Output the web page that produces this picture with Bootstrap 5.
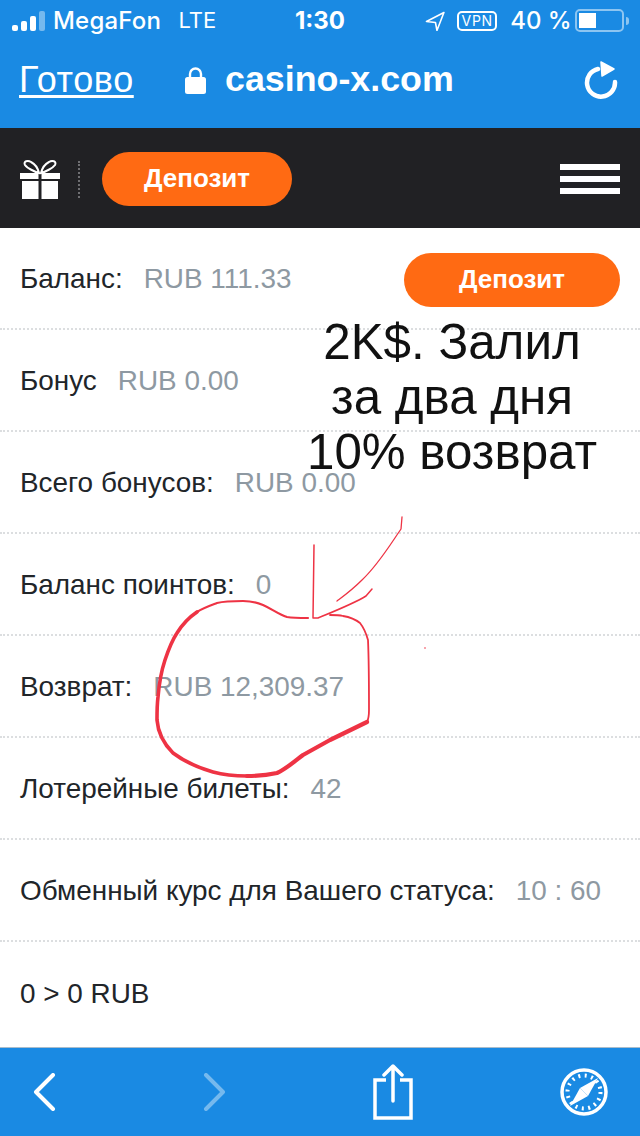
<!DOCTYPE html>
<html lang="ru">
<head>
    <meta charset="UTF-8">
    <title>casino-x.com</title>
    <link href="https://cdn.jsdelivr.net/npm/bootstrap@5.3.3/dist/css/bootstrap.min.css" rel="stylesheet">
    <style>
        body { background: #fff; font-family: "Liberation Sans", sans-serif; overflow: hidden; }
        .page-wrap { width: 640px; height: 1136px; position: relative; }
        .safari-top { height: 128px; background: #1a8ae3; color: #fff; font-family: Inter, "Liberation Sans", sans-serif; }
        .status-row { height: 41px; padding: 0 11px 0 12px; font-size: 24px; line-height: 41px; }
        .signal { gap: 3px; height: 20px; width: 33px; margin-right: 8px; }
        .signal i { display: block; width: 6px; background: #fff; border-radius: 2px; }
        .signal i:nth-child(1) { height: 6px; }
        .signal i:nth-child(2) { height: 10px; }
        .signal i:nth-child(3) { height: 15px; }
        .signal i:nth-child(4) { height: 20px; opacity: .4; }
        .net-name { font-weight: 500; font-size: 24px; letter-spacing: .2px; width: 126px; }
        .net-type { font-size: 22px; width: 117px; }
        .clock { font-weight: 700; font-size: 24px; width: 127px; }
        .vpn-tag { border: 2px solid #fff; border-radius: 5px; font-size: 14px; line-height: 16px; padding: 1px 3px; margin: 0 13px 0 12px; letter-spacing: .8px; width: 40px; height: 20px; }
        .pct { font-weight: 500; font-size: 24px; width: 61px; white-space: nowrap; }
        .batt { width: 49px; height: 23px; border: 2px solid rgba(255,255,255,.5); border-radius: 5px; padding: 2px; margin-left: 4px; }
        .batt i { display: block; width: 17px; height: 15px; background: #fff; }
        .batt-tip { width: 3px; height: 8px; background: rgba(255,255,255,.5); margin-left: 2px; border-radius: 0 3px 3px 0; }
        .addr-row { height: 87px; padding: 0 22px 9px 19px; font-family: "Liberation Sans", sans-serif; }
        .done-link { color: #fff; font-size: 36px; text-decoration: underline; text-underline-offset: 3px; width: 166px; letter-spacing: .6px; }
        .host { font-size: 35.800px; font-weight: 700; margin-left: 19px; }
        .site-bar { height: 100px; background: #212124; padding: 2px 20px 0; }
        .gift-sep { height: 37px; border-left: 2px dotted #6f6f72; margin: 0 22px 0 18px; }
        .btn-orange { background: #ff6a13; color: #fff; font-weight: 700; font-size: 26px; border: 0; border-radius: 27px; height: 54px; line-height: 52px; padding: 0; text-align: center; }
        .btn-orange:hover { background: #ff6a13; color: #fff; }
        .btn-top { width: 190px; }
        .btn-side { width: 216px; margin-top: 1px; }
        .burger { width: 60px; }
        .burger i { display: block; height: 6px; background: #fff; margin-bottom: 6px; }
        .burger i:last-child { margin-bottom: 0; }
        .info-list { height: 819px; font-size: 27.900px; line-height: 1.1; color: #212529; }
        .info-row { height: 102px; padding: 2px 20px 0; border-bottom: 2px dotted #dcdee0; }
        .info-row:last-child { border-bottom: 0; }
        .info-val { color: #8e99a2; margin-left: 21px; }
        .safari-bottom { height: 89px; background: #1a8ae3; border-top: 1px solid #a9bccb; padding: 0 32px; }
        .fwd-ico { margin-left: 143px; }
        .share-ico { margin-left: 145px; }
        .note-text { position: absolute; left: 290px; top: 314px; width: 324px; text-align: center; font-size: 49.300px; line-height: 55px; color: #111; }
        .scribble { position: absolute; left: 0; top: 0; pointer-events: none; }
    </style>
</head>
<body>

<div class="page-wrap d-flex flex-column">
    <div class="safari-top">
        <div class="status-row d-flex align-items-center">
            <span class="signal d-flex align-items-end"><i></i><i></i><i></i><i></i></span>
            <span class="net-name">MegaFon</span>
            <span class="net-type">LTE</span>
            <span class="clock">1:30</span>
            <svg width="20" height="20" viewBox="0 0 20 20" fill="none" stroke="#fff" stroke-width="1.600" stroke-linejoin="round" class="ms-1"><path d="M19 1.500 1.500 10.500 10.500 11.500 12 19.500Z"/></svg>
            <span class="vpn-tag d-inline-flex align-items-center justify-content-center">VPN</span>
            <span class="pct">40 %</span>
            <span class="batt"><i></i></span>
            <span class="batt-tip"></span>
        </div>
        <div class="addr-row d-flex align-items-center">
            <a href="#" class="done-link">Готово</a>
            <svg width="21" height="28" viewBox="0 0 21 28" fill="#fff"><path d="M5 12V8a5.500 5.500 0 0 1 11 0v4" fill="none" stroke="#fff" stroke-width="2.400"/><rect x="0" y="11" width="21" height="17" rx="2.500"/></svg>
            <span class="host">casino-x.com</span>
            <svg class="ms-auto" width="34" height="38" viewBox="0 0 34 38" fill="none"><path d="M14 8A14 14 0 1 0 31 21" stroke="#fff" stroke-width="4.500" stroke-linecap="round"/><path d="M17 1 30 8 18 15Z" fill="#fff" stroke="#fff" stroke-width="1.500" stroke-linejoin="round"/></svg>
        </div>
    </div>

    <div class="site-bar d-flex align-items-center">
        <svg width="40" height="40" viewBox="0 0 40 40" fill="#fff"><path d="M19 14C15 13 7 9 5 6c-2-4 3-5 6-3 4 2 7 7 8 11Zm2 0c4-1 12-5 14-8 2-4-3-5-6-3-4 2-7 7-8 11Z" fill="none" stroke="#fff" stroke-width="2"/><rect x="0" y="14" width="18.500" height="6"/><rect x="21.500" y="14" width="18.500" height="6"/><rect x="2" y="22" width="16.500" height="18"/><rect x="21.500" y="22" width="16.500" height="18"/></svg>
        <span class="gift-sep"></span>
        <a href="#" class="btn btn-orange btn-top">Депозит</a>
        <div class="burger ms-auto"><i></i><i></i><i></i></div>
    </div>

    <div class="info-list">
        <div class="info-row d-flex align-items-center">
            <span>Баланс:</span><span class="info-val">RUB 111.33</span>
            <a href="#" class="btn btn-orange btn-side ms-auto">Депозит</a>
        </div>
        <div class="info-row d-flex align-items-center"><span>Бонус</span><span class="info-val">RUB 0.00</span></div>
        <div class="info-row d-flex align-items-center"><span>Всего бонусов:</span><span class="info-val">RUB 0.00</span></div>
        <div class="info-row d-flex align-items-center"><span>Баланс поинтов:</span><span class="info-val">0</span></div>
        <div class="info-row d-flex align-items-center"><span>Возврат:</span><span class="info-val">RUB 12,309.37</span></div>
        <div class="info-row d-flex align-items-center"><span>Лотерейные билеты:</span><span class="info-val">42</span></div>
        <div class="info-row d-flex align-items-center"><span>Обменный курс для Вашего статуса:</span><span class="info-val">10 : 60</span></div>
        <div class="info-row d-flex align-items-center"><span>0 &gt; 0 RUB</span></div>
    </div>

    <div class="safari-bottom d-flex align-items-center">
        <svg width="26" height="38" viewBox="0 0 26 38" fill="none" stroke="#fff" stroke-width="4" stroke-linecap="round" stroke-linejoin="round"><path d="M21 2 4 19l17 17"/></svg>
        <svg width="26" height="38" viewBox="0 0 26 38" fill="none" stroke="#fff" stroke-opacity=".4" stroke-width="4" stroke-linecap="round" stroke-linejoin="round" class="fwd-ico"><path d="M5 2l17 17L5 36"/></svg>
        <svg width="42" height="56" viewBox="0 0 42 56" fill="none" stroke="#fff" stroke-width="3.500" class="share-ico"><path d="M14 16H3v38h36V16H28"/><path d="M21 37V3M12 11l9-9 9 9" stroke-linecap="round" stroke-linejoin="round"/></svg>
        <svg class="ms-auto" width="48" height="48" viewBox="0 0 48 48" fill="none" stroke="#fff"><circle cx="24" cy="24" r="22" stroke-width="3.500"/><circle cx="24" cy="24" r="16.500" stroke-width="4" stroke-dasharray="2 4.500"/><path d="M38 10 28 28 20 20Z" fill="#fff" stroke="none"/><path d="M10 38 20 20 28 28Z" fill="#fff" stroke="none"/></svg>
    </div>

    <div class="note-text">2K$. Залил<br>за два дня<br>10% возврат</div>

    <svg class="scribble" width="640" height="1136" viewBox="0 0 640 1136" fill="none" stroke="#ee3344" stroke-linecap="round" stroke-linejoin="round">
        <path d="M402 517 401 529C390 545 378 565 362 580 352 590 345 595 337 601" stroke-width="1.300"/>
        <path d="M314 545 313 618 318 618C335 611 355 603 366 596L372 589" stroke-width="1.500"/>
        <path d="M308 618C300 618 293 618 287 617 278 614 272 609 263 605 256 602 250 601 243 601 233 601 225 601 217 603 209 606 203 608 197 612" stroke-width="2.200"/>
        <path d="M197 612C188 618 182 625 177 633 171 642 168 651 165 660 161 672 159 685 158 697 157 705 157 712 157 720 158 733 165 745 173 753 185 762 199 768 213 772 224 775 235 776 247 776" stroke-width="3.600"/>
        <path d="M247 776C258 776 268 775 277 773 286 769 295 761 303 755 312 750 321 745 330 740L367 722" stroke-width="4.200"/>
        <path d="M367 722C369 718 369 714 369 710 369 687 369 663 368 640 366 633 364 628 360 623 355 619 349 617 343 616 339 615 335 615 330 615" stroke-width="1.800"/>
        <circle cx="425" cy="648" r=".8" fill="#ee3344" stroke="none"/>
    </svg>
</div>

<script src="https://cdn.jsdelivr.net/npm/bootstrap@5.3.3/dist/js/bootstrap.bundle.min.js"></script>
</body>
</html>
